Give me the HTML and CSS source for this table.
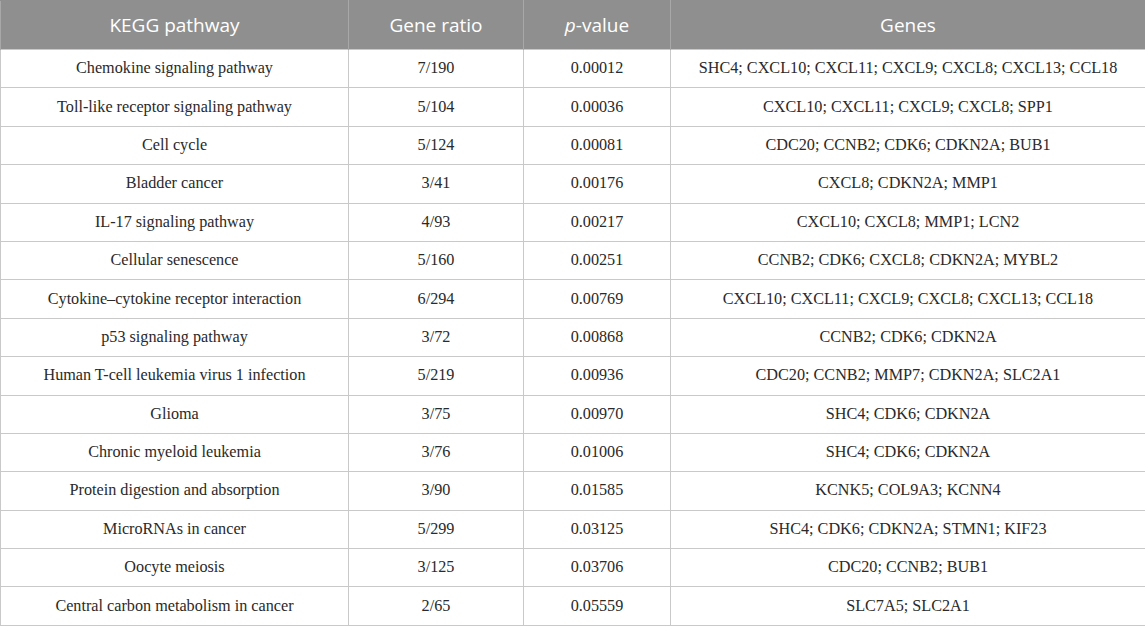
FILE: index.html
```html
<!DOCTYPE html>
<html>
<head>
<meta charset="utf-8">
<link rel="stylesheet" href="styles.css">
</head>
<body>
<table class="kegg">
  <colgroup>
    <col class="c1"><col class="c2"><col class="c3"><col class="c4">
  </colgroup>
  <thead>
    <tr><th>KEGG pathway</th><th>Gene ratio</th><th><i>p</i>-value</th><th>Genes</th></tr>
  </thead>
  <tbody>
    <tr><td>Chemokine signaling pathway</td><td>7/190</td><td>0.00012</td><td>SHC4; CXCL10; CXCL11; CXCL9; CXCL8; CXCL13; CCL18</td></tr>
    <tr><td>Toll-like receptor signaling pathway</td><td>5/104</td><td>0.00036</td><td>CXCL10; CXCL11; CXCL9; CXCL8; SPP1</td></tr>
    <tr><td>Cell cycle</td><td>5/124</td><td>0.00081</td><td>CDC20; CCNB2; CDK6; CDKN2A; BUB1</td></tr>
    <tr><td>Bladder cancer</td><td>3/41</td><td>0.00176</td><td>CXCL8; CDKN2A; MMP1</td></tr>
    <tr><td>IL-17 signaling pathway</td><td>4/93</td><td>0.00217</td><td>CXCL10; CXCL8; MMP1; LCN2</td></tr>
    <tr><td>Cellular senescence</td><td>5/160</td><td>0.00251</td><td>CCNB2; CDK6; CXCL8; CDKN2A; MYBL2</td></tr>
    <tr><td>Cytokine–cytokine receptor interaction</td><td>6/294</td><td>0.00769</td><td>CXCL10; CXCL11; CXCL9; CXCL8; CXCL13; CCL18</td></tr>
    <tr><td>p53 signaling pathway</td><td>3/72</td><td>0.00868</td><td>CCNB2; CDK6; CDKN2A</td></tr>
    <tr><td>Human T-cell leukemia virus 1 infection</td><td>5/219</td><td>0.00936</td><td>CDC20; CCNB2; MMP7; CDKN2A; SLC2A1</td></tr>
    <tr><td>Glioma</td><td>3/75</td><td>0.00970</td><td>SHC4; CDK6; CDKN2A</td></tr>
    <tr><td>Chronic myeloid leukemia</td><td>3/76</td><td>0.01006</td><td>SHC4; CDK6; CDKN2A</td></tr>
    <tr><td>Protein digestion and absorption</td><td>3/90</td><td>0.01585</td><td>KCNK5; COL9A3; KCNN4</td></tr>
    <tr><td>MicroRNAs in cancer</td><td>5/299</td><td>0.03125</td><td>SHC4; CDK6; CDKN2A; STMN1; KIF23</td></tr>
    <tr><td>Oocyte meiosis</td><td>3/125</td><td>0.03706</td><td>CDC20; CCNB2; BUB1</td></tr>
    <tr><td>Central carbon metabolism in cancer</td><td>2/65</td><td>0.05559</td><td>SLC7A5; SLC2A1</td></tr>
  </tbody>
</table>
</body>
</html>
```
FILE: styles.css
```css
html, body {
  margin: 0;
  padding: 0;
  background: #ffffff;
}
.kegg {
  width: 1145px;
  border-collapse: collapse;
  table-layout: fixed;
}
.c1 { width: 348px; }
.c2 { width: 175px; }
.c3 { width: 147px; }
.c4 { width: 475px; }
.kegg th {
  background: #8f8f8f;
  color: #ffffff;
  font-family: "Open Sans", "Noto Sans", sans-serif;
  font-weight: normal;
  font-size: 19px;
  height: 48px;
  padding: 0;
  text-align: center;
  border-left: 1px solid #a8a8a8;
  border-right: 1px solid #a8a8a8;
  border-top: 1px solid #8f8f8f;
}
.kegg td {
  font-family: "Liberation Serif", "Times New Roman", serif;
  font-size: 16.2px;
  color: #2a2a2a;
  height: 37.4px;
  padding: 0;
  text-align: center;
  border: 1px solid #c9c9c9;
}
```
